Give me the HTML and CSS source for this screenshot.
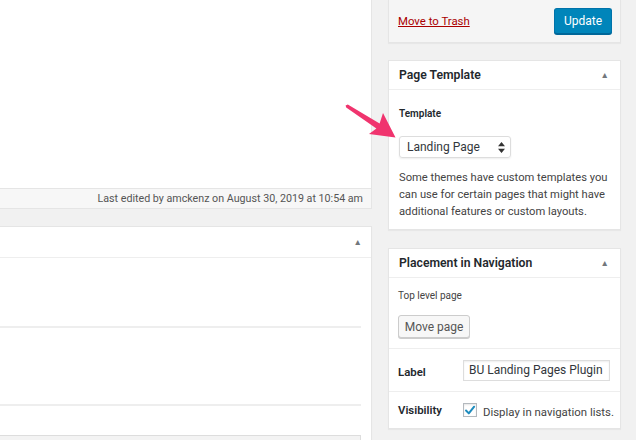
FILE: index.html
```html
<!DOCTYPE html>
<html>
<head>
<meta charset="utf-8">
<link rel="stylesheet" href="styles.css">
</head>
<body>
<div class="page">
  <div class="main">
    <div class="editor">
      <div class="editor-body"></div>
      <div class="status">Last edited by amckenz on August 30, 2019 at 10:54 am</div>
    </div>
    <div class="box lower">
      <div class="lower-head"><span class="toggle">&#9650;</span></div>
      <div class="lower-row r1"></div>
      <div class="lower-row r2"></div>
      <div class="lower-field"></div>
    </div>
  </div>
  <div class="side">
    <div class="publish">
      <a class="trash" href="#">Move to Trash</a>
      <button class="btn-primary">Update</button>
    </div>
    <div class="box template">
      <div class="hndle"><span>Page Template</span><span class="toggle">&#9650;</span></div>
      <div class="template-body">
        <div class="small-label">Template</div>
        <div class="select">
          <span>Landing Page</span>
          <svg class="updown" width="7" height="11" viewBox="0 0 7 11"><path d="M3.5 0 L7 4.2 L0 4.2 Z M3.5 11 L7 6.8 L0 6.8 Z" fill="#333"/></svg>
        </div>
        <p class="desc">Some themes have custom templates you can use for certain pages that might have additional features or custom layouts.</p>
      </div>
    </div>
    <div class="box placement">
      <div class="hndle"><span>Placement in Navigation</span><span class="toggle">&#9650;</span></div>
      <div class="place-top">
        <div class="small-text">Top level page</div>
        <button class="btn">Move page</button>
      </div>
      <div class="field-row label-row">
        <span class="field-name">Label</span>
        <div class="input">BU Landing Pages Plugin</div>
      </div>
      <div class="field-row vis-row">
        <span class="field-name">Visibility</span>
        <label class="check">
          <span class="checkbox"><svg width="13" height="13" viewBox="0 0 13 13"><path d="M2.2 6.6 L5.2 9.6 L11 2.4" fill="none" stroke="#1e8cbe" stroke-width="2.2" stroke-linecap="round" stroke-linejoin="round"/></svg></span>
          <span class="check-text">Display in navigation lists.</span>
        </label>
      </div>
    </div>
  </div>
</div>
<svg class="arrow" width="636" height="440" viewBox="0 0 636 440">
  <polygon points="347.8,104.6 379.6,123.5 383,113 395.5,137.5 369,134 376.4,128.5 346.2,107.4 345.6,105.6" fill="#f0346e"/>
</svg>
</body>
</html>
```

FILE: styles.css
```css
* { box-sizing: border-box; }
body {
  margin: 0;
  background: #f1f1f1;
  font-family: Roboto, "Liberation Sans", Arial, sans-serif;
  color: #444;
  font-size: 11.4px;
  width: 636px;
  height: 440px;
  overflow: hidden;
  position: relative;
}
.page {
  display: flex;
  gap: 16px;
  height: 440px;
  overflow: hidden;
}
.main {
  width: 372px;
  flex: none;
  display: flex;
  flex-direction: column;
}
.main > *, .side > * { flex-shrink: 0; }
.editor {
  background: #fff;
  border-right: 1px solid #e5e5e5;
  border-bottom: 1px solid #e5e5e5;
}
.editor-body { height: 188px; }
.status {
  height: 20px;
  background: #f7f7f7;
  border-top: 1px solid #e5e5e5;
  text-align: right;
  padding-right: 8px;
  line-height: 19px;
  font-size: 10.7px;
  color: #555;
}
.box {
  background: #fff;
  border: 1px solid #e5e5e5;
  box-shadow: 0 1px 1px rgba(0,0,0,.04);
}
.lower {
  margin-top: 17px;
  border-left: none;
  flex: 1;
  padding-right: 10px;
}
.lower-head {
  height: 31px;
  border-bottom: 1px solid #eee;
  margin-right: -10px;
  display: flex;
  justify-content: flex-end;
  align-items: center;
  padding-right: 9px;
}
.toggle {
  font-size: 8.5px;
  color: #72777c;
  line-height: 1;
}
.lower-row { border-bottom: 2px solid #eee; }
.r1 { height: 70px; }
.r2 { height: 78px; }
.lower-field {
  margin-top: 29px;
  height: 30px;
  background: #f3f3f3;
  border: 1px solid #ddd;
  border-left: none;
}
.side {
  width: 233px;
  flex: none;
  display: flex;
  flex-direction: column;
}
.publish {
  height: 43px;
  background: #f5f5f5;
  border: 1px solid #e5e5e5;
  border-top: none;
  box-shadow: 0 1px 1px rgba(0,0,0,.04);
  display: flex;
  justify-content: space-between;
  align-items: center;
  padding: 0 8px 1px 9px;
}
.trash {
  color: #a00;
  font-size: 11.4px;
  text-decoration: underline;
}
.btn-primary {
  font-family: inherit;
  font-size: 12px;
  color: #fff;
  background: #0085ba;
  border: 1px solid #0073aa;
  border-bottom-color: #006799;
  border-radius: 3px;
  height: 26px;
  width: 58px;
  padding: 0;
  box-shadow: 0 1px 0 #006799;
}
.template { margin-top: 17px; }
.hndle {
  height: 29px;
  border-bottom: 1px solid #eee;
  display: flex;
  justify-content: space-between;
  align-items: center;
  padding: 0 11px 0 10px;
  font-size: 12.2px;
  font-weight: 600;
  color: #23282d;
}
.template-body { padding: 17px 6px 9px 10px; }
.small-label {
  font-size: 10px;
  font-weight: 600;
  line-height: 14px;
  color: #23282d;
}
.select {
  margin-top: 15px;
  width: 112px;
  height: 22px;
  border: 1px solid #ddd;
  border-radius: 3px;
  box-shadow: 0 1px 2px rgba(0,0,0,.07);
  display: flex;
  align-items: center;
  justify-content: space-between;
  padding: 0 5px 0 7px;
  font-size: 12px;
  color: #32373c;
}
.desc {
  margin: 11px 0 0;
  font-size: 11.2px;
  line-height: 17px;
}
.placement { margin-top: 18px; }
.place-top {
  padding: 11px 9px 10px;
  border-bottom: 1px solid #eee;
}
.small-text {
  font-size: 10px;
  line-height: 14px;
  color: #444;
}
.btn {
  margin-top: 12px;
  font-family: inherit;
  font-size: 12px;
  color: #555;
  background: #f7f7f7;
  border: 1px solid #ccc;
  border-radius: 3px;
  box-shadow: 0 1px 0 #ccc;
  height: 23px;
  width: 72px;
  padding: 0;
  display: block;
}
.field-row {
  display: grid;
  grid-template-columns: 65px 1fr;
  align-items: center;
  padding: 0 10px 0 9px;
}
.label-row {
  height: 43px;
  border-bottom: 1px solid #eee;
}
.vis-row { height: 36px; }
.field-name {
  font-weight: 600;
  font-size: 11.4px;
  color: #23282d;
}
.label-row .field-name { padding-top: 4px; }
.input {
  height: 21px;
  border: 1px solid #ddd;
  box-shadow: inset 0 1px 2px rgba(0,0,0,.07);
  font-size: 12px;
  line-height: 19px;
  padding-left: 5px;
  color: #32373c;
  white-space: nowrap;
  overflow: hidden;
}
.check {
  display: flex;
  align-items: center;
  gap: 6px;
  font-size: 11.4px;
  color: #444;
  white-space: nowrap;
}
.checkbox {
  width: 14px;
  height: 14px;
  flex: none;
  border: 1px solid #b4b9be;
  background: #fff;
  box-shadow: inset 0 1px 2px rgba(0,0,0,.1);
  display: flex;
  align-items: center;
  justify-content: center;
}
.checkbox svg { display: block; }
.check-text { padding-top: 3px; }
.arrow {
  position: absolute;
  left: 0;
  top: 0;
  pointer-events: none;
}
```
